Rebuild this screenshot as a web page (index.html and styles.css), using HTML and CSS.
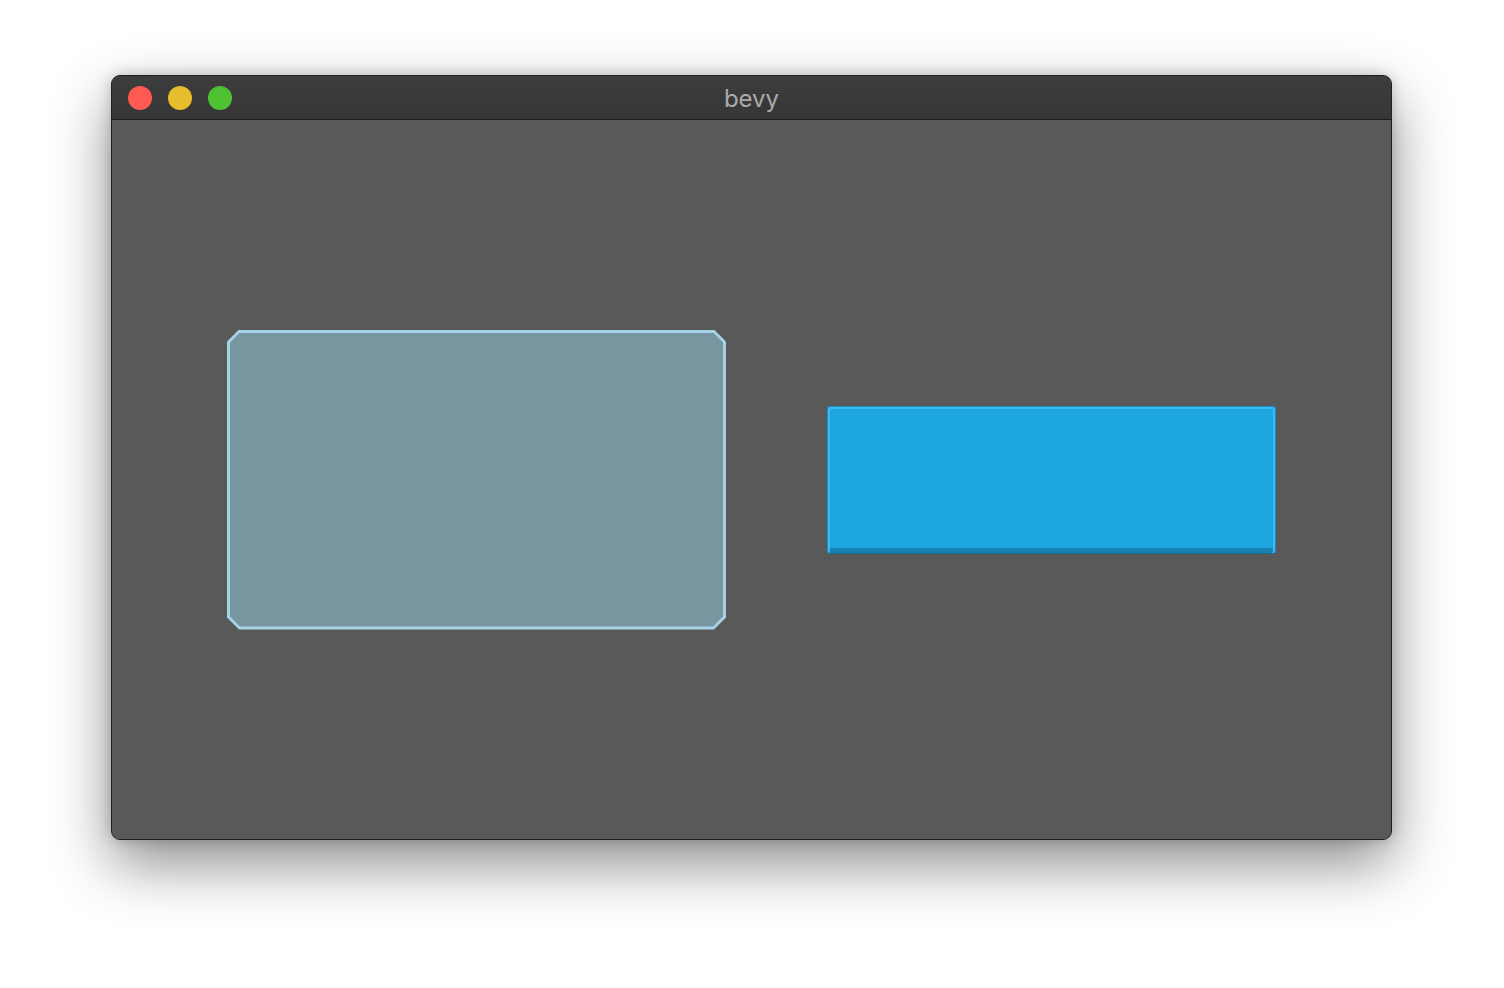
FILE: index.html
```html
<!DOCTYPE html>
<html>
<head>
<meta charset="utf-8">
<link rel="stylesheet" href="styles.css">
</head>
<body>
<div class="window">
  <div class="titlebar">
    <div class="lights">
      <span class="light red"></span>
      <span class="light yellow"></span>
      <span class="light green"></span>
    </div>
    <div class="title">bevy</div>
  </div>
  <div class="content">
    <div class="panel"><div class="panel-fill"></div></div>
    <div class="button"></div>
  </div>
</div>
</body>
</html>
```
FILE: styles.css
```css
html, body {
  margin: 0;
  padding: 0;
  background: #ffffff;
}
body {
  padding: 75px 0 0 111px;
  width: 1504px;
  height: 988px;
  box-sizing: border-box;
  overflow: hidden;
}
.window {
  width: 1281px;
  height: 765px;
  box-sizing: border-box;
  border: 1px solid #1f1f1f;
  border-radius: 9px;
  overflow: hidden;
  background: #595959;
  box-shadow: 0 24px 60px rgba(0, 0, 0, 0.45), 0 0 14px rgba(0, 0, 0, 0.2);
  display: flex;
  flex-direction: column;
}
.titlebar {
  height: 43px;
  flex: none;
  position: relative;
  background: linear-gradient(#3d3d3d, #363636);
  border-bottom: 1px solid #1c1c1c;
  display: flex;
  align-items: center;
  justify-content: center;
}
.lights {
  position: absolute;
  left: 16px;
  top: 10px;
  display: flex;
  gap: 16px;
}
.light {
  width: 24px;
  height: 24px;
  border-radius: 50%;
  display: block;
}
.red { background: #fe5a52; }
.yellow { background: #e6bd2d; }
.green { background: #50c132; }
.title {
  font-family: Inter, "Liberation Sans", Arial, sans-serif;
  font-size: 24px;
  color: #aaaaaa;
  margin-top: 2px;
}
.content {
  flex: 1;
  display: flex;
  align-items: center;
  justify-content: center;
  gap: 101px;
  background: #595959;
}
.panel {
  width: 499px;
  height: 300px;
  background: #a3d3e4;
  clip-path: polygon(12px 0, calc(100% - 12px) 0, 100% 12px, 100% calc(100% - 12px), calc(100% - 12px) 100%, 12px 100%, 0 calc(100% - 12px), 0 12px);
  padding: 3px;
  box-sizing: border-box;
}
.panel-fill {
  width: 100%;
  height: 100%;
  background: #7896a0;
  clip-path: polygon(10px 0, calc(100% - 10px) 0, 100% 10px, 100% calc(100% - 10px), calc(100% - 10px) 100%, 10px 100%, 0 calc(100% - 10px), 0 10px);
}
.button {
  width: 449px;
  height: 148px;
  box-sizing: border-box;
  background: #1ea6e0;
  border: 1px solid #1a8cc4;
  border-bottom-color: #176d96;
  border-radius: 3px;
  box-shadow: inset 2px 2px 0 #3dbaf0, inset -2px 0 0 #3dbaf0, inset 0 -5px 0 #1a80b0;
}
```
